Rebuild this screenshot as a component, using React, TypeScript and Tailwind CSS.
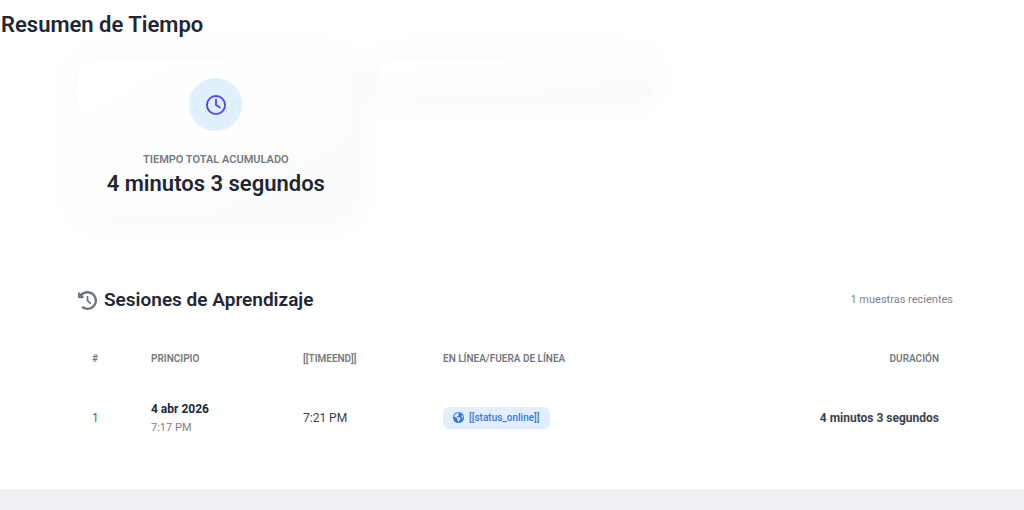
import type { ReactNode } from "react";
import { FaClockRotateLeft, FaEarthAmericas, FaRegClock } from "react-icons/fa6";

type Session = {
  id: number;
  date: string;
  start: string;
  end: string;
  status: string;
  duration: string;
};

const sessions: Session[] = [
  {
    id: 1,
    date: "4 abr 2026",
    start: "7:17 PM",
    end: "7:21 PM",
    status: "[[status_online]]",
    duration: "4 minutos 3 segundos",
  },
];

function Card({ children }: { children?: ReactNode }) {
  return (
    <div className="flex min-h-10 flex-col items-center rounded-lg bg-linear-to-br from-white to-[#fafcfb] shadow-[0_0_40px_4px_#f7faf9]">
      {children}
    </div>
  );
}

export default function App() {
  return (
    <div className="flex min-h-screen flex-col bg-[#eff0f4] font-['Roboto',sans-serif] text-[#212733]">
      <main className="bg-white pb-9">
        <h1 className="relative z-10 pt-[9px] pl-px text-[22px] leading-8 font-semibold">Resumen de Tiempo</h1>

        <div className="pr-[71px] pl-[78px]">
          <section className="grid grid-cols-3 items-start gap-6 pt-[17px]">
            <Card>
              <div className="mt-5 flex size-[53px] items-center justify-center rounded-full bg-[#e1effe]">
                <FaRegClock className="size-5 text-[#5145ef]" aria-hidden="true" />
              </div>
              <p className="mt-[19px] text-[11px] leading-5 font-semibold text-[#757a81] uppercase">
                Tiempo total acumulado
              </p>
              <p className="mb-[19px] text-[22px] leading-7 font-semibold">4 minutos 3 segundos</p>
            </Card>
            <Card />
          </section>

          <section className="pt-[67px]">
            <header className="flex items-center justify-between">
              <h2 className="flex items-center gap-[7px] text-[19px] leading-8 font-semibold">
                <FaClockRotateLeft className="size-[19px] text-[#70767d]" aria-hidden="true" />
                Sesiones de Aprendizaje
              </h2>
              <span className="text-[11px] leading-5 text-[#7d838a]">1 muestras recientes</span>
            </header>

            <table className="mt-5 w-full table-fixed border-collapse text-left">
              <colgroup>
                <col className="w-[61px]" />
                <col className="w-[152px]" />
                <col className="w-[140px]" />
                <col />
                <col />
              </colgroup>
              <thead>
                <tr className="h-[45px] border-b border-[#fbfbfc] text-[10px] text-[#757a81] uppercase">
                  <th className="px-[14px] font-semibold">#</th>
                  <th className="px-3 font-semibold">Principio</th>
                  <th className="px-3 font-semibold">[[timeend]]</th>
                  <th className="px-3 font-semibold">En línea/Fuera de línea</th>
                  <th className="px-[14px] text-right font-semibold">Duración</th>
                </tr>
              </thead>
              <tbody>
                {sessions.map((session) => (
                  <tr key={session.id} className="h-[71px] border-b border-[#fbfbfc] text-xs">
                    <td className="px-[14px] pt-0.5 text-[#60666e]">{session.id}</td>
                    <td className="px-3 pt-0.5">
                      <div className="leading-5 font-bold">{session.date}</div>
                      <div className="text-[11px] leading-[18px] text-[#7d838a]">{session.start}</div>
                    </td>
                    <td className="px-3 pt-0.5 text-[#3b414a]">{session.end}</td>
                    <td className="px-3 pt-0.5">
                      <span className="inline-flex items-center gap-[5px] rounded-md bg-[#e1effe] px-[10px] text-[10px] leading-[22px] font-medium text-[#3877df]">
                        <FaEarthAmericas className="size-[11px]" aria-hidden="true" />
                        {session.status}
                      </span>
                    </td>
                    <td className="px-[14px] pt-0.5 text-right font-bold text-[#3b414a]">{session.duration}</td>
                  </tr>
                ))}
              </tbody>
            </table>
          </section>
        </div>
      </main>
    </div>
  );
}
